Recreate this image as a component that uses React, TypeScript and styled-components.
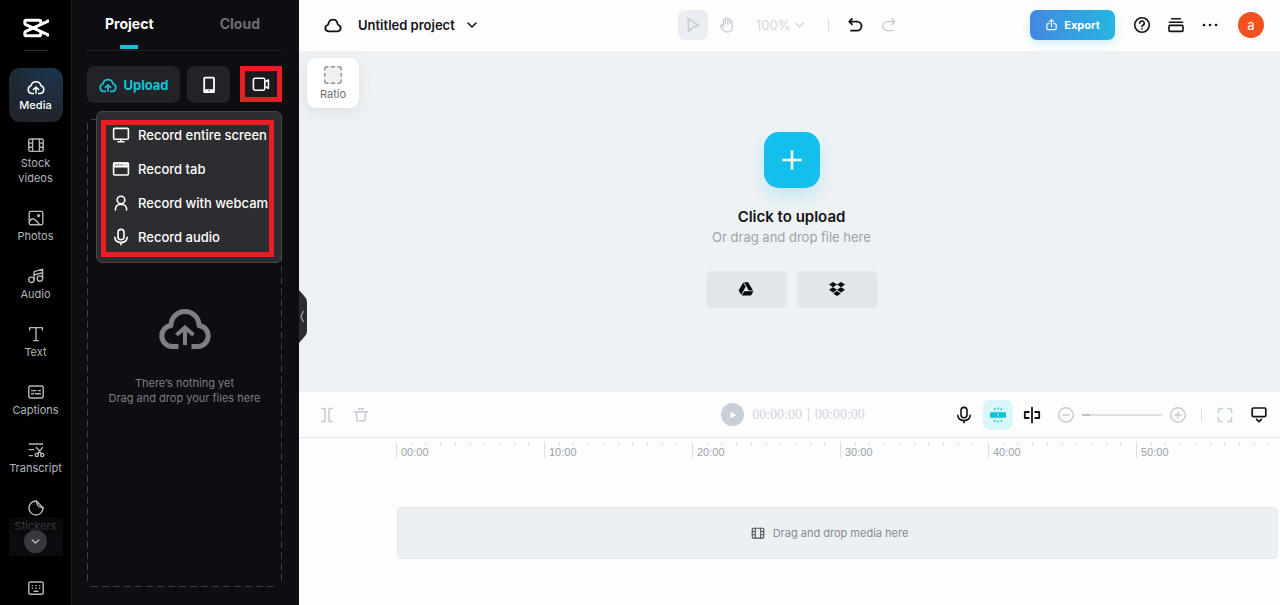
import React from 'react';
import styled, { createGlobalStyle, css } from 'styled-components';

const GlobalStyle = createGlobalStyle`
  *, *::before, *::after { box-sizing: border-box; }
  body { margin: 0; font-family: Inter, 'Liberation Sans', sans-serif; }
  button, select, input { font: inherit; color: inherit; margin: 0; }
  button { border: 0; padding: 0; background: none; cursor: pointer; }
  h2, p { margin: 0; }
`;

/* ---------- icons ---------- */

const Svg = styled.svg`
  display: block;
  flex: none;
  fill: none;
  stroke: currentColor;
  stroke-linecap: round;
  stroke-linejoin: round;
`;

type IconProps = { w?: number; h?: number; box?: string; sw?: number; children: React.ReactNode };

const Icon = ({ w = 20, h = w, box = `0 0 ${w} ${h}`, sw = 1.4, children }: IconProps) => (
  <Svg width={w} height={h} viewBox={box} strokeWidth={sw} aria-hidden="true">
    {children}
  </Svg>
);

const CapLogo = () => (
  <Icon w={26} h={20} sw={3}>
    <path strokeLinecap="butt" d="M25.2 1.4V3.2L2.8 13.4Q1.8 14 1.8 15V16.2Q1.8 17.8 3.4 17.8H16Q17.8 17.8 17.8 16.2V14" />
    <path strokeLinecap="butt" d="M25.2 18.6V16.8L2.8 6.6Q1.8 6 1.8 5V3.8Q1.8 2.2 3.4 2.2H16Q17.8 2.2 17.8 3.8V6" />
  </Icon>
);

const CloudUpload = ({ size = 20, sw = 1.5 }: { size?: number; sw?: number }) => (
  <Icon w={size} box="0 0 20 20" sw={sw}>
    <path strokeLinecap="butt" d="M8 16.4H5.6A3.9 3.9 0 0 1 5 8.8A5.1 5.1 0 0 1 15 8.8A3.9 3.9 0 0 1 14.4 16.4H12" />
    <path strokeLinecap="butt" strokeLinejoin="miter" d="M10 16.8V10.6M6.9 12.9L10 10.2L13.1 12.9" />
  </Icon>
);

const Film = ({ size = 20 }: { size?: number }) => (
  <Icon w={size} box="0 0 20 20">
    <rect x="2.8" y="4" width="14.4" height="12.4" rx="1.4" />
    <path d="M6.6 4V16.4M13.4 4V16.4M2.8 8.1H6.6M2.8 12.2H6.6M13.4 8.1H17.2M13.4 12.2H17.2" />
  </Icon>
);

const Photo = () => (
  <Icon>
    <rect x="3.2" y="3.4" width="13.6" height="13.4" rx="1.6" />
    <path d="M3.6 13.4Q5.6 9.6 8.4 11.4T13.4 16.4" />
    <circle cx="12.6" cy="7.6" r="0.9" fill="currentColor" />
  </Icon>
);

const Music = () => (
  <Icon>
    <circle cx="5.4" cy="13.8" r="2.7" />
    <circle cx="13.9" cy="12.6" r="2.7" />
    <path d="M8.1 13.8V5.6L16.6 3.2V12.6M8.1 9L16.6 6.6" />
  </Icon>
);

const TextT = () => (
  <Icon>
    <path d="M3.6 6V3.6H16.4V6M10 3.6V16.6M7.6 16.6H12.4" />
  </Icon>
);

const Captions = () => (
  <Icon>
    <rect x="2.8" y="4" width="14.4" height="12" rx="1.4" />
    <path d="M5.6 8.6H10M12.4 8.6H14.4M5.6 11.8H7.4M9.6 11.8H14.4" />
  </Icon>
);

const Transcript = () => (
  <Icon>
    <path d="M3.2 4H16.6M3.2 9.6H7.6M3.2 15.6H6.4M10.6 7.6L15.6 13.8M16.4 7.6L11.6 13.8" />
    <circle cx="10.8" cy="15" r="1.6" />
    <circle cx="16.2" cy="15" r="1.6" />
  </Icon>
);

const Sticker = () => (
  <Icon>
    <path d="M10.4 3A7 7 0 1 0 17 9.8Z" />
    <path d="M10.4 3Q10.8 9.4 17 9.8" />
  </Icon>
);

const Keyboard = () => (
  <Icon>
    <rect x="2.8" y="4" width="14.4" height="12.2" rx="1.8" />
    <path d="M6.2 7.6H6.6M9.8 7.6H10.2M13.4 7.6H13.8M6.2 10.2H6.6M9.8 10.2H10.2M13.4 10.2H13.8M8 13.2H12" />
  </Icon>
);

const Chevron = ({ w = 10, h = 6, sw = 1.5 }: { w?: number; h?: number; sw?: number }) => (
  <Icon w={w} h={h} box="0 0 10 6" sw={sw}>
    <path d="M1 1L5 5L9 1" />
  </Icon>
);

const Phone = () => (
  <Icon sw={1.8}>
    <rect x="5.2" y="2.6" width="9.8" height="14.6" rx="1" />
    <path d="M5.4 15.2H14.8V17H5.4Z" fill="currentColor" />
    <path d="M10 15.6H10.2" stroke="#232327" strokeWidth="1.2" />
  </Icon>
);

const Camera = () => (
  <Icon sw={1.6}>
    <rect x="2.4" y="4.2" width="11.4" height="12" rx="1.6" />
    <path d="M13.8 8L17.4 6V14.4L13.8 12.4" />
  </Icon>
);

const Monitor = () => (
  <Icon w={18} sw={1.6}>
    <rect x="1.6" y="2.4" width="14.8" height="10.8" rx="1" />
    <path d="M9 13.2V15.8M6 15.8H12" />
  </Icon>
);

const Browser = () => (
  <Icon w={18} sw={1.6}>
    <rect x="1.6" y="3" width="14.8" height="12" rx="1" />
    <path d="M1.6 6.6H16.4M1.8 3.4H16" />
    <path d="M2 5H16" />
    <path d="M4 4.8H4.1M6.6 4.8H6.7M9.2 4.8H9.3" stroke="#2d2d31" strokeWidth="1.1" />
  </Icon>
);

const Person = () => (
  <Icon w={18} sw={1.6}>
    <circle cx="9" cy="6" r="3.8" />
    <path d="M3.4 16V15Q3.8 10.4 9 10.2Q14.2 10.4 14.6 15V16" />
  </Icon>
);

const Mic = () => (
  <Icon w={18} sw={1.6}>
    <rect x="6" y="1.4" width="6" height="10.4" rx="3" />
    <path d="M2.8 9.4Q3.2 14.4 9 14.6Q14.8 14.4 15.2 9.4M9 14.6V16.8" />
  </Icon>
);

const Cloud = () => (
  <Icon w={20} sw={1.8}>
    <path d="M5.2 16.4A3.3 3.3 0 0 1 4.6 10Q5.4 9.8 5.6 8.2A4.5 4.5 0 0 1 14.4 8.2Q14.6 9.8 15.4 10A3.3 3.3 0 0 1 14.8 16.4Z" />
  </Icon>
);

/* ---------- shell ---------- */

const Shell = styled.div`
  display: flex;
  height: 100vh;
  min-height: 560px;
  overflow: hidden;
  background: #fdfdfe;
`;

/* ---------- navigation rail ---------- */

const Rail = styled.nav`
  flex: none;
  width: 72px;
  display: flex;
  flex-direction: column;
  align-items: center;
  background: #000;
  border-right: 1px solid #1b1b1f;
  color: #b3b6bb;
`;

const Brand = styled.div`
  height: 51px;
  width: 24px;
  display: flex;
  justify-content: center;
  padding-top: 18px;
  border-bottom: 1px solid #2c2c30;
  color: #fff;
`;

const RailList = styled.div`
  flex: 1;
  min-height: 0;
  width: 54px;
  margin-top: 17px;
  display: flex;
  flex-direction: column;
  gap: 4px;
  overflow: hidden;
  position: relative;
`;

const RailItem = styled.button<{ $active?: boolean }>`
  flex: none;
  padding: 9px 0;
  display: flex;
  flex-direction: column;
  align-items: center;
  gap: 1px;
  border-radius: 11px;
  font-size: 11px;
  line-height: 15px;
  ${(p) =>
    p.$active &&
    css`
      color: #fff;
      font-weight: 500;
      background: radial-gradient(circle at 80% 0, #1b3550 0, #20262e 70%, #222428 100%);
    `}
`;

const RailMore = styled.div`
  position: absolute;
  inset: auto 0 0;
  height: 39px;
  display: flex;
  justify-content: center;
  align-items: flex-end;
  padding-bottom: 3px;
  background: linear-gradient(rgba(12, 12, 16, 0.6), #0c0c10 60%);
`;

const RoundButton = styled.button`
  width: 23px;
  height: 23px;
  border-radius: 50%;
  background: #38383c;
  color: #c8c8cc;
  display: grid;
  place-items: center;
`;

const RailFoot = styled.div`
  flex: none;
  height: 49px;
  padding-top: 22px;
`;

/* ---------- media panel ---------- */

const Panel = styled.aside`
  flex: none;
  width: 227px;
  padding: 0 16px 18px 15px;
  display: flex;
  flex-direction: column;
  background: #0e0d12;
  position: relative;
`;

const Tabs = styled.div`
  height: 51px;
  padding: 0 23px 0 18px;
  display: flex;
  justify-content: space-between;
  border-bottom: 1px solid #1f1f24;
`;

const Tab = styled.button<{ $active?: boolean }>`
  height: 49px;
  display: flex;
  flex-direction: column;
  align-items: center;
  justify-content: space-between;
  padding-top: 14px;
  font-size: 14px;
  line-height: 20px;
  font-weight: 700;
  color: ${(p) => (p.$active ? '#fff' : '#6d6d73')};
  &::after {
    content: '';
    width: 18px;
    height: 4px;
    background: ${(p) => (p.$active ? '#12c2d8' : 'transparent')};
  }
`;

const UploadRow = styled.div`
  display: flex;
  gap: 7px;
  margin-top: 15px;
  position: relative;
`;

const UploadButton = styled.button<{ $wide?: boolean }>`
  width: ${(p) => (p.$wide ? 93 : 43)}px;
  height: 37px;
  display: flex;
  align-items: center;
  justify-content: center;
  gap: 5px;
  border-radius: 7px;
  background: #232327;
  color: ${(p) => (p.$wide ? '#14c4d6' : '#fff')};
  font-size: 13px;
  font-weight: 700;
`;

const RecordButton = styled(UploadButton)`
  width: 42px;
  height: 36px;
  margin-left: auto;
  margin-right: 1px;
  border: 5px solid #ec1c24;
  border-radius: 0;
  background: #1b1b1f;
`;

const RecordMenu = styled.div`
  position: absolute;
  top: 45px;
  right: 1px;
  z-index: 2;
  width: 186px;
  padding: 8px 7px 5px 4px;
  border: 1px solid #47474c;
  border-radius: 6px;
  background: #2d2d31;
`;

const RecordList = styled.div`
  display: flex;
  flex-direction: column;
  gap: 14px;
  padding-bottom: 5px;
  border: 5px solid #ec1c24;
`;

const RecordItem = styled.button`
  height: 20px;
  padding-left: 6px;
  display: flex;
  align-items: center;
  gap: 8px;
  color: #fff;
  font-size: 13px;
  font-weight: 500;
  white-space: nowrap;
`;

const dash = (dir: string) => `repeating-linear-gradient(${dir}, #3d3d43 0 7px, transparent 7px 11px)`;

const DropZone = styled.div`
  flex: 1;
  margin: 16px 1px 0 0;
  padding-top: 182px;
  display: flex;
  flex-direction: column;
  align-items: center;
  color: #7e7e83;
  font-size: 11px;
  line-height: 15px;
  text-align: center;
  background:
    ${dash('to right')} 4px 0 / calc(100% - 8px) 1px no-repeat,
    ${dash('to right')} 4px 100% / calc(100% - 8px) 1px no-repeat,
    ${dash('to bottom')} 0 4px / 1px calc(100% - 8px) no-repeat,
    ${dash('to bottom')} 100% 4px / 1px calc(100% - 8px) no-repeat;
`;

const DropHint = styled.p`
  margin-top: 21px;
`;

const Collapse = styled.button`
  position: absolute;
  left: 100%;
  top: 290px;
  z-index: 3;
  width: 8px;
  height: 53px;
`;

/* ---------- header ---------- */

const Main = styled.main`
  flex: 1;
  min-width: 0;
  display: flex;
  flex-direction: column;
`;

const Header = styled.header`
  flex: none;
  height: 51px;
  padding: 0 16px 2px 19px;
  display: grid;
  grid-template-columns: 1fr auto 1fr;
  align-items: center;
  color: #111318;
`;

const Group = styled.div<{ $gap?: number; $end?: boolean }>`
  display: flex;
  align-items: center;
  gap: ${(p) => p.$gap ?? 0}px;
  justify-content: ${(p) => (p.$end ? 'flex-end' : 'flex-start')};
`;

const ProjectName = styled.button`
  display: flex;
  align-items: center;
  gap: 12px;
  font-size: 13px;
  font-weight: 600;
  white-space: nowrap;
`;

const Tool = styled.button<{ $tone?: 'muted' | 'selected' | 'accent' }>`
  width: 30px;
  height: 30px;
  flex: none;
  display: grid;
  place-items: center;
  border-radius: 7px;
  color: ${(p) => (p.$tone === 'accent' ? '#0fc3d4' : p.$tone ? '#c5cbd2' : '#111318')};
  background: ${(p) => (p.$tone === 'accent' ? '#d9f6f8' : p.$tone === 'selected' ? '#eaeef2' : 'transparent')};
`;

const ZoomField = styled.div`
  display: flex;
  align-items: center;
  margin: 0 12px 0 10px;
  color: #d3d7dc;
`;

const ZoomSelect = styled.select`
  appearance: none;
  width: 38px;
  border: 0;
  padding: 0;
  background: none;
  font-size: 13px;
  line-height: 18px;
`;

const Rule = styled.span<{ $space?: number }>`
  width: 1px;
  height: 14px;
  margin: 0 ${(p) => p.$space ?? 0}px;
  background: #dcdfe4;
`;

const ExportButton = styled.button`
  width: 85px;
  height: 30px;
  margin-right: 8px;
  display: flex;
  align-items: center;
  justify-content: center;
  gap: 6px;
  border-radius: 7px;
  background: linear-gradient(90deg, #4189e0, #27b5e2);
  box-shadow: 0 3px 8px rgba(60, 190, 225, 0.25);
  color: #fff;
  font-size: 11px;
  font-weight: 700;
`;

const Avatar = styled.button`
  width: 26px;
  height: 26px;
  margin-left: 9px;
  border-radius: 50%;
  background: #f2511f;
  color: #fff;
  font-size: 13px;
  line-height: 26px;
`;

/* ---------- stage ---------- */

const Stage = styled.section`
  flex: 1;
  min-height: 260px;
  padding: 0 0 4px 4px;
  display: flex;
  flex-direction: column;
  align-items: center;
  justify-content: center;
  position: relative;
  background: #eef2f5;
`;

const RatioButton = styled.button`
  position: absolute;
  left: 8px;
  top: 7px;
  width: 52px;
  height: 50px;
  display: flex;
  flex-direction: column;
  align-items: center;
  justify-content: center;
  gap: 2px;
  border-radius: 9px;
  background: #fff;
  box-shadow: 0 4px 14px rgba(60, 80, 100, 0.1);
  color: #6a6f77;
  font-size: 11px;
  line-height: 15px;
`;

const AddButton = styled.button`
  width: 56px;
  height: 56px;
  display: grid;
  place-items: center;
  border-radius: 15px;
  background: #14c0eb;
  box-shadow: 0 8px 16px rgba(20, 192, 235, 0.2);
  color: #fff;
`;

const StageTitle = styled.h2`
  margin-top: 19px;
  font-size: 15px;
  line-height: 20px;
  font-weight: 600;
  color: #111318;
`;

const StageHint = styled.p`
  font-size: 13px;
  line-height: 20px;
  color: #9da2a9;
`;

const Sources = styled.div`
  display: flex;
  gap: 10px;
  margin-top: 24px;
`;

const SourceButton = styled.button`
  width: 81px;
  height: 37px;
  display: grid;
  place-items: center;
  border-radius: 6px;
  background: #e1e6ea;
  color: #05070a;
`;

/* ---------- timeline ---------- */

const Transport = styled.div`
  flex: none;
  height: 46px;
  padding: 0 6px 0 13px;
  display: grid;
  grid-template-columns: 1fr auto 1fr;
  align-items: center;
  border-bottom: 1px solid #e3e6e9;
`;

const PlayButton = styled.button`
  width: 23px;
  height: 23px;
  display: grid;
  place-items: center;
  border-radius: 50%;
  background: #c9ced7;
  color: #fff;
`;

const TimeCode = styled.span`
  font-family: 'Liberation Serif', serif;
  font-size: 14px;
  line-height: 18px;
  color: #cfd5dd;
`;

const ZoomRange = styled.input`
  appearance: none;
  width: 80px;
  height: 14px;
  background: linear-gradient(#dfe3e7, #dfe3e7) center / 100% 2px no-repeat;
  &::-webkit-slider-thumb {
    appearance: none;
    width: 8px;
    height: 2px;
    background: #b9bfc7;
  }
`;

const Timeline = styled.section`
  flex: none;
  height: 167px;
  overflow: hidden;
`;

const Ruler = styled.div`
  height: 69px;
  padding: 4px 0 0 97px;
  display: flex;
  overflow: hidden;
`;

const Segment = styled.div`
  flex: none;
  width: 148px;
  height: 16px;
  border-left: 1px solid #dddfe3;
  color: #9ba1a9;
  font-family: 'Liberation Sans', sans-serif;
  font-size: 11px;
  line-height: 13px;
`;

const Ticks = styled.div`
  display: flex;
  height: 4px;
`;

const Tick = styled.span`
  flex: 1;
  border-right: 1px solid #e2e4e8;
  &:last-child {
    border-color: transparent;
  }
`;

const TimeLabel = styled.span`
  display: block;
  padding-left: 4px;
`;

const Track = styled.div`
  height: 52px;
  margin: 0 2px 0 98px;
  padding-right: 17px;
  display: flex;
  align-items: center;
  justify-content: center;
  gap: 7px;
  border: 1px solid #e6eaee;
  border-radius: 4px;
  background: #edf0f3;
  color: #858b94;
  font-size: 11px;
`;

const TrackIcon = styled.span`
  color: #4b515a;
`;

const railItems: { label: string; icon: React.ReactNode }[] = [
  { label: 'Media', icon: <CloudUpload /> },
  { label: 'Stock videos', icon: <Film /> },
  { label: 'Photos', icon: <Photo /> },
  { label: 'Audio', icon: <Music /> },
  { label: 'Text', icon: <TextT /> },
  { label: 'Captions', icon: <Captions /> },
  { label: 'Transcript', icon: <Transcript /> },
  { label: 'Stickers', icon: <Sticker /> },
];

const recordItems: { label: string; icon: React.ReactNode }[] = [
  { label: 'Record entire screen', icon: <Monitor /> },
  { label: 'Record tab', icon: <Browser /> },
  { label: 'Record with webcam', icon: <Person /> },
  { label: 'Record audio', icon: <Mic /> },
];

const marks = ['00:00', '10:00', '20:00', '30:00', '40:00', '50:00'];

export default function App() {
  return (
    <Shell>
      <GlobalStyle />

      <Rail aria-label="Tools">
        <Brand>
          <CapLogo />
        </Brand>
        <RailList>
          {railItems.map((item, i) => (
            <RailItem key={item.label} $active={i === 0}>
              {item.icon}
              {item.label}
            </RailItem>
          ))}
          <RailMore>
            <RoundButton aria-label="More tools">
              <Chevron w={9} h={5} />
            </RoundButton>
          </RailMore>
        </RailList>
        <RailFoot>
          <button aria-label="Keyboard shortcuts">
            <Keyboard />
          </button>
        </RailFoot>
      </Rail>

      <Panel>
        <Tabs role="tablist">
          <Tab role="tab" aria-selected="true" $active>
            Project
          </Tab>
          <Tab role="tab" aria-selected="false">
            Cloud
          </Tab>
        </Tabs>
        <UploadRow>
          <UploadButton $wide>
            <CloudUpload sw={1.7} />
            Upload
          </UploadButton>
          <UploadButton aria-label="Upload from phone">
            <Phone />
          </UploadButton>
          <RecordButton aria-label="Record">
            <Camera />
          </RecordButton>
          <RecordMenu>
            <RecordList role="menu">
              {recordItems.map((item) => (
                <RecordItem key={item.label} role="menuitem">
                  {item.icon}
                  {item.label}
                </RecordItem>
              ))}
            </RecordList>
          </RecordMenu>
        </UploadRow>
        <DropZone>
          <Icon w={54} h={54} box="0 0 54 54" sw={5}>
            <path strokeLinecap="butt" d="M20.5 45.5H14A10.6 10.6 0 0 1 13 24.4A14 14 0 0 1 41 24.4A10.6 10.6 0 0 1 40 45.5H33.5" />
            <path strokeLinecap="butt" strokeLinejoin="miter" strokeWidth="4" d="M27 44V27M18.5 34L27 26.5L35.5 34" />
          </Icon>
          <DropHint>
            There’s nothing yet
            <br />
            Drag and drop your files here
          </DropHint>
        </DropZone>
        <Collapse aria-label="Collapse panel">
          <Icon w={8} h={53} sw={1.2}>
            <path d="M0 0L6 7Q8 9 8 12V41Q8 44 6 46L0 53Z" fill="#2b2c30" stroke="none" />
            <path d="M4.4 21.5L1.8 26.5L4.4 31.5" stroke="#a2a4a8" />
          </Icon>
        </Collapse>
      </Panel>

      <Main>
        <Header>
          <Group $gap={10}>
            <Tool aria-label="Cloud sync">
              <Cloud />
            </Tool>
            <ProjectName>
              Untitled project
              <Chevron />
            </ProjectName>
          </Group>
          <Group $gap={4}>
            <Tool $tone="selected" aria-label="Select">
              <Icon w={18} sw={1.5}>
                <path d="M4 2.4L15 9.6L9.4 11L4.6 15.6Z" />
              </Icon>
            </Tool>
            <Tool $tone="muted" aria-label="Pan">
              <Icon w={18} sw={1.3}>
                <path d="M5.4 10.6V4.6Q5.4 3.4 6.4 3.4T7.4 4.6V3.2Q7.6 1.8 8.6 1.8T9.8 3.2V4Q9.9 2.8 10.9 2.8T12.1 4V5.6Q12.3 4.6 13.2 4.6T14.4 5.8V10.4Q14.4 16 9.4 16Q6.6 16 5.2 13.8L2.8 10.8Q2 9.6 3 9Q4 8.6 4.8 9.8ZM7.4 4.6V8M9.8 4V8M12.1 5.6V8" />
              </Icon>
            </Tool>
            <ZoomField>
              <ZoomSelect defaultValue="100" aria-label="Canvas zoom">
                <option value="50">50%</option>
                <option value="100">100%</option>
                <option value="200">200%</option>
              </ZoomSelect>
              <Chevron w={11} h={6} sw={1.3} />
            </ZoomField>
            <Rule $space={7} />
            <Tool aria-label="Undo">
              <Icon w={18} sw={1.8}>
                <path d="M6 2.8L3.2 5.6L6 8.4M3.4 5.6H11A4 4 0 0 1 11 14.6H5" />
              </Icon>
            </Tool>
            <Tool $tone="muted" aria-label="Redo">
              <Icon w={18} sw={1.4}>
                <path d="M12 2.8L14.8 5.6L12 8.4M14.6 5.6H7.4A4 4 0 0 0 7.4 14.6H13" />
              </Icon>
            </Tool>
          </Group>
          <Group $gap={4} $end>
            <ExportButton>
              <Icon w={13} sw={1.2}>
                <path d="M4 5.6H3.2Q1.8 5.6 1.8 7V10.2Q1.8 11.6 3.2 11.6H9.8Q11.2 11.6 11.2 10.2V7Q11.2 5.6 9.8 5.6H9M6.5 8.6V1.8M4.4 3.6L6.5 1.6L8.6 3.6" />
              </Icon>
              Export
            </ExportButton>
            <Tool aria-label="Help">
              <Icon w={18} sw={1.6}>
                <circle cx="9" cy="9" r="7.3" />
                <path d="M6.8 7.2A2.2 2.2 0 1 1 9.8 9.2Q9 9.6 9 10.4M9 12.8V12.9" />
              </Icon>
            </Tool>
            <Tool aria-label="Projects">
              <Icon w={18} sw={1.6}>
                <rect x="2" y="9.4" width="14" height="6" rx="1" />
                <path d="M2.4 6.2H15.6M4.6 2.8H13.4" />
              </Icon>
            </Tool>
            <Tool aria-label="More">
              <Icon w={18} sw={2.6}>
                <path d="M3 9H3.1M9 9H9.1M15 9H15.1" />
              </Icon>
            </Tool>
            <Avatar aria-label="Account">a</Avatar>
          </Group>
        </Header>

        <Stage>
          <RatioButton>
            <Icon w={20} sw={1.4}>
              <rect x="2" y="2" width="16" height="16" rx="3" fill="#f0f1f3" stroke="none" />
              <path d="M1.8 5V4Q1.8 1.8 4 1.8H5M8.4 1.8H11.6M15 1.8H16Q18.2 1.8 18.2 4V5M18.2 8.4V11.6M18.2 15V16Q18.2 18.2 16 18.2H15M11.6 18.2H8.4M5 18.2H4Q1.8 18.2 1.8 16V15M1.8 11.6V8.4" stroke="#8a8f96" />
            </Icon>
            Ratio
          </RatioButton>
          <AddButton aria-label="Add media">
            <Icon w={20} sw={2.6}>
              <path d="M10 0.5V19.5M0.5 10H19.5" strokeLinecap="butt" />
            </Icon>
          </AddButton>
          <StageTitle>Click to upload</StageTitle>
          <StageHint>Or drag and drop file here</StageHint>
          <Sources>
            <SourceButton aria-label="Upload from Google Drive">
              <Icon w={16}>
                <g fill="currentColor" stroke="none">
                  <path d="M5.2 1.6L7.6 5.8L3.2 13.8L0.6 9.6Z" />
                  <path d="M6 1.2H10.2L15 9.4H10.8Z" />
                  <path d="M6.2 10.2H15.4L13 14.4H3.8Z" />
                </g>
              </Icon>
            </SourceButton>
            <SourceButton aria-label="Upload from Dropbox">
              <Icon w={18} h={16}>
                <g fill="currentColor" stroke="none">
                  <path d="M5 1L9 3.6L5 6.2L1 3.6ZM13 1L17 3.6L13 6.2L9 3.6ZM5 6.2L9 8.8L5 11.4L1 8.8ZM13 6.2L17 8.8L13 11.4L9 8.8ZM9 10L12.8 12.4L9 15L5.2 12.4Z" />
                </g>
              </Icon>
            </SourceButton>
          </Sources>
        </Stage>

        <Transport>
          <Group $gap={4}>
            <Tool $tone="muted" aria-label="Split">
              <Icon w={18} sw={1.5}>
                <path d="M3.6 2.4H7V15.6H3.6M14.4 2.4H11V15.6H14.4" />
              </Icon>
            </Tool>
            <Tool $tone="muted" aria-label="Delete">
              <Icon w={18} sw={1.5}>
                <path d="M2.4 5.8H15.6M4.4 5.8L5 14.8H13L13.6 5.8M6.4 3.2Q9 2 11.6 3.2" />
              </Icon>
            </Tool>
          </Group>
          <Group $gap={8}>
            <PlayButton aria-label="Play">
              <Icon w={8} h={8}>
                <path d="M1.4 0.8L7.2 4L1.4 7.2Z" fill="currentColor" stroke="none" />
              </Icon>
            </PlayButton>
            <Group $gap={6}>
              <TimeCode>00:00:00</TimeCode>
              <Rule />
              <TimeCode>00:00:00</TimeCode>
            </Group>
          </Group>
          <Group $gap={4} $end>
            <Tool aria-label="Record voice">
              <Mic />
            </Tool>
            <Tool $tone="accent" aria-label="Snap">
              <Icon w={18} sw={1.6}>
                <rect x="1" y="6.2" width="16" height="5.6" rx="1" fill="currentColor" stroke="none" />
                <path d="M9 8V10" stroke="#b7eef3" strokeWidth="1" />
                <path d="M9 2V2.4M5.6 3L5.8 3.4M12.4 3L12.2 3.4M9 15.6V16M5.6 15L5.8 14.6M12.4 15L12.2 14.6" />
              </Icon>
            </Tool>
            <Tool aria-label="Link tracks">
              <Icon w={18} sw={1.8}>
                <path d="M9 1.6V16.4M5.8 6H1.8V12H5.8M12.2 6H16.2V12H12.2" />
              </Icon>
            </Tool>
            <Group $gap={1}>
              <Tool $tone="muted" aria-label="Zoom out">
                <Icon w={18} sw={1.4}>
                  <circle cx="9" cy="9" r="7.2" />
                  <path d="M6 9H12" />
                </Icon>
              </Tool>
              <ZoomRange type="range" min={0} max={100} defaultValue={0} aria-label="Timeline zoom" />
              <Tool $tone="muted" aria-label="Zoom in">
                <Icon w={18} sw={1.4}>
                  <circle cx="9" cy="9" r="7.2" />
                  <path d="M6 9H12M9 6V12" />
                </Icon>
              </Tool>
            </Group>
            <Rule $space={4} />
            <Tool $tone="muted" aria-label="Fit timeline">
              <Icon w={18} sw={1.5}>
                <path d="M2.4 6.4V4Q2.4 2.4 4 2.4H6.4M11.6 2.4H14Q15.6 2.4 15.6 4V6.4M15.6 11.6V14Q15.6 15.6 14 15.6H11.6M6.4 15.6H4Q2.4 15.6 2.4 14V11.6" />
              </Icon>
            </Tool>
            <Tool aria-label="Preview quality">
              <Icon w={18} sw={1.7}>
                <rect x="2.2" y="2" width="13.6" height="8.6" rx="1.2" />
                <path d="M6.6 13.4L9 15.6L11.4 13.4" />
              </Icon>
            </Tool>
          </Group>
        </Transport>

        <Timeline>
          <Ruler>
            {marks.map((mark) => (
              <Segment key={mark}>
                <Ticks>
                  {Array.from({ length: 10 }, (_, i) => (
                    <Tick key={i} />
                  ))}
                </Ticks>
                <TimeLabel>{mark}</TimeLabel>
              </Segment>
            ))}
          </Ruler>
          <Track>
            <TrackIcon>
              <Film size={16} />
            </TrackIcon>
            Drag and drop media here
          </Track>
        </Timeline>
      </Main>
    </Shell>
  );
}
